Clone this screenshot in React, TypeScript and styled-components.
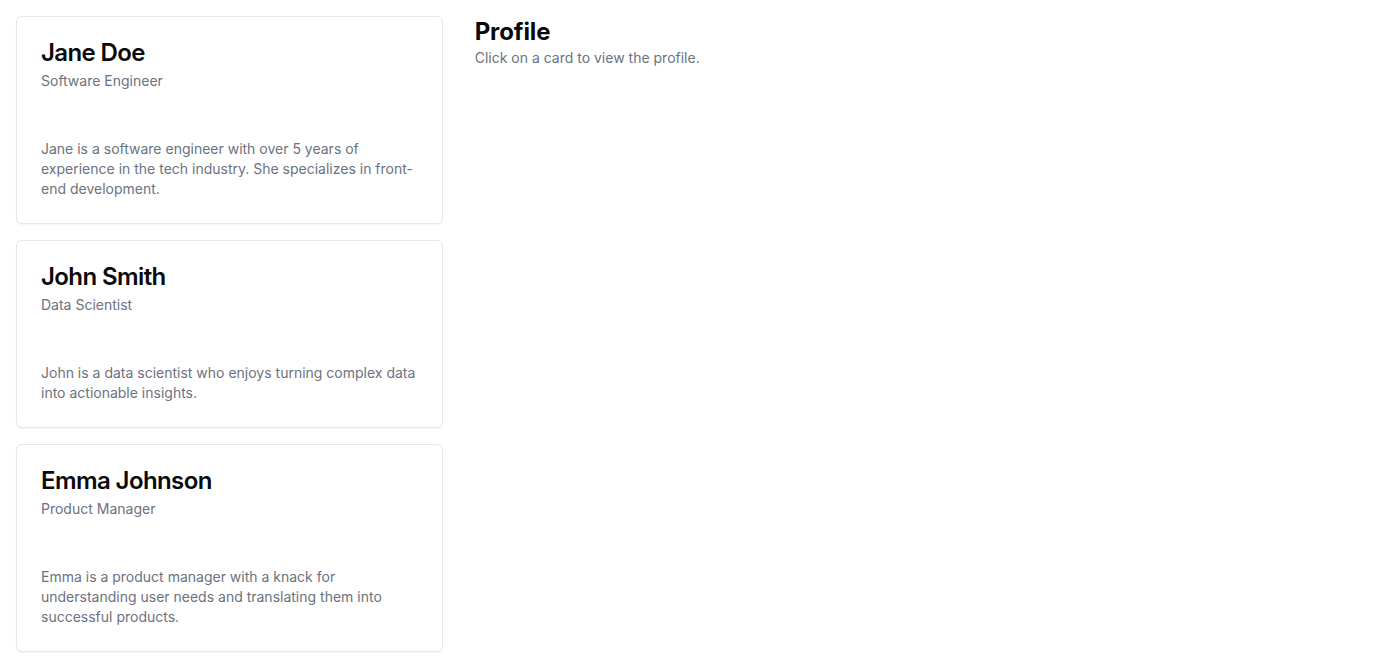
import React from "react";
import styled, { createGlobalStyle } from "styled-components";

const Global = createGlobalStyle`
  * { box-sizing: border-box; }
  html, body { margin: 0; padding: 0; background: #ffffff; }
  body { font-family: Inter, "Noto Sans", "Liberation Sans", sans-serif; color: #0a0a0a; }
`;

const Page = styled.div`
  padding: 16px;
  display: grid;
  grid-template-columns: repeat(3, minmax(0, 1fr));
  gap: 32px;
  align-items: start;
`;

const CardList = styled.div`
  display: flex;
  flex-direction: column;
  gap: 16px;
`;

const Card = styled.div`
  border: 1px solid #e5e7eb;
  border-radius: 6px;
  background: #ffffff;
  box-shadow: 0 1px 2px 0 rgba(0, 0, 0, 0.05);
  cursor: pointer;
`;

const CardHeader = styled.div`
  padding: 24px;
  display: flex;
  flex-direction: column;
  gap: 6px;
`;

const CardTitle = styled.h3`
  margin: 0;
  font-size: 24px;
  line-height: 24px;
  font-weight: 600;
  letter-spacing: -0.025em;
  color: #0a0a0a;
`;

const Muted = styled.p`
  margin: 0;
  font-size: 14px;
  line-height: 20px;
  color: #6b7280;
`;

const CardContent = styled.div`
  padding: 24px;
  padding-top: 24px;
`;

const ProfilePanel = styled.div`
  grid-column: span 2;
`;

const ProfileTitle = styled.h2`
  margin: 0;
  font-size: 24px;
  line-height: 32px;
  font-weight: 700;
  letter-spacing: -0.005em;
  color: #0a0a0a;
`;

const people = [
  {
    name: "Jane Doe",
    role: "Software Engineer",
    bio: "Jane is a software engineer with over 5 years of experience in the tech industry. She specializes in front-end development.",
  },
  {
    name: "John Smith",
    role: "Data Scientist",
    bio: "John is a data scientist who enjoys turning complex data into actionable insights.",
  },
  {
    name: "Emma Johnson",
    role: "Product Manager",
    bio: "Emma is a product manager with a knack for understanding user needs and translating them into successful products.",
  },
];

export default function App() {
  return (
    <>
      <Global />
      <Page>
        <CardList>
          {people.map((p) => (
            <Card key={p.name}>
              <CardHeader>
                <CardTitle>{p.name}</CardTitle>
                <Muted>{p.role}</Muted>
              </CardHeader>
              <CardContent>
                <Muted>{p.bio}</Muted>
              </CardContent>
            </Card>
          ))}
        </CardList>
        <ProfilePanel>
          <ProfileTitle>Profile</ProfileTitle>
          <Muted>Click on a card to view the profile.</Muted>
        </ProfilePanel>
      </Page>
    </>
  );
}
